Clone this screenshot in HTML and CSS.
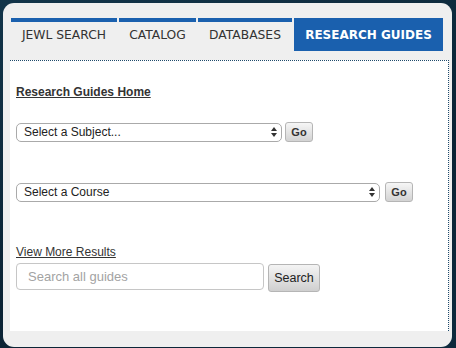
FILE: index.html
```html
<!DOCTYPE html>
<html lang="en">
<head>
    <meta charset="UTF-8">
    <title>Research Guides</title>
    <link rel="stylesheet" href="styles.css">
</head>
<body>
    <div class="panel">
        <ul class="tabs">
            <li class="tab jewl">JEWL SEARCH</li>
            <li class="tab catalog">CATALOG</li>
            <li class="tab databases">DATABASES</li>
            <li class="tab active">RESEARCH GUIDES</li>
        </ul>
        <div class="tab-box">
            <a href="#" class="home-link">Research Guides Home</a>
            <form class="pick-row subject-row" action="">
                <span class="select-wrap subject-select">
                    <select>
                        <option>Select a Subject...</option>
                    </select>
                    <svg class="arrows" width="6" height="10" viewBox="0 0 6 10"><path d="M3 0 L6 4 L0 4 Z M0 6 L6 6 L3 10 Z" fill="#333"/></svg>
                </span>
                <button class="go-button">Go</button>
            </form>
            <form class="pick-row course-row" action="">
                <span class="select-wrap course-select">
                    <select>
                        <option>Select a Course</option>
                    </select>
                    <svg class="arrows" width="6" height="10" viewBox="0 0 6 10"><path d="M3 0 L6 4 L0 4 Z M0 6 L6 6 L3 10 Z" fill="#333"/></svg>
                </span>
                <button class="go-button">Go</button>
            </form>
            <a href="#" class="more-link">View More Results</a>
            <form class="search-row" action="">
                <input type="text" placeholder="Search all guides">
                <button class="search-button">Search</button>
            </form>
        </div>
    </div>
</body>
</html>
```

FILE: styles.css
```css
*{
    margin:0;
    padding:0;
    box-sizing:border-box;
}
body{
    background:linear-gradient(160deg,#123449 0%,#0b2334 60%,#0e2a3d 100%);
    height:348px;
    overflow:hidden;
    padding:3px 0 0 3px;
}
.panel{
    width:449px;
    height:344px;
    background-color:#efefef;
    border-radius:11px;
    padding:15px 3px 0 7px;
}
.tabs{
    list-style:none;
    display:flex;
    gap:2px;
    margin-left:1px;
}
.tab{
    border-top:4px solid #1a60ae;
    height:33px;
    line-height:27px;
    text-align:center;
    font-family:"DejaVu Sans",Verdana,sans-serif;
    font-size:12.3px;
    color:#333;
}
.jewl{
    width:106px;
}
.catalog{
    width:77px;
}
.databases{
    width:94px;
}
.tab.active{
    width:149px;
    background-color:#1a60ae;
    color:#fff;
    font-weight:bold;
    font-size:12px;
}
.tab-box{
    margin-top:9px;
    height:271px;
    background-color:#fff;
    border-top:1px dotted #1f4a6b;
    border-right:1px dotted #1f4a6b;
    padding:0 0 0 6px;
    font-family:"Liberation Sans",Arial,sans-serif;
}
.home-link{
    display:block;
    margin-top:24px;
    line-height:15px;
    font-size:12px;
    font-weight:bold;
    color:#333;
}
.pick-row{
    display:flex;
    align-items:center;
}
.subject-row{
    margin-top:22px;
}
.course-row{
    margin-top:40px;
}
.select-wrap{
    position:relative;
    display:block;
}
.subject-select{
    width:266px;
}
.course-select{
    width:364px;
}
.select-wrap select{
    appearance:none;
    -webkit-appearance:none;
    width:100%;
    height:19px;
    border:1px solid #aaa;
    border-radius:5px;
    background-color:#fff;
    padding-left:7px;
    font-family:"Liberation Sans",Arial,sans-serif;
    font-size:12px;
    color:#222;
}
.arrows{
    position:absolute;
    right:5px;
    top:5px;
}
.go-button{
    margin-left:3px;
    width:28px;
    height:20px;
    border:1px solid #b5b5b5;
    border-radius:3px;
    background:linear-gradient(#f6f6f6,#d3d3d3);
    font-family:"Liberation Sans",Arial,sans-serif;
    font-size:11px;
    font-weight:bold;
    color:#333;
}
.course-row .go-button{
    margin-left:5px;
}
.more-link{
    display:block;
    margin-top:43px;
    line-height:15px;
    font-size:12px;
    color:#333;
}
.search-row{
    display:flex;
    align-items:flex-start;
    margin-top:3px;
}
.search-row input{
    width:248px;
    height:27px;
    border:1px solid #c6c6c6;
    border-radius:4px;
    padding-left:11px;
    font-family:"Liberation Sans",Arial,sans-serif;
    font-size:13px;
    color:#333;
}
.search-row input::placeholder{
    color:#a3a3a3;
}
.search-button{
    margin-left:4px;
    margin-top:1px;
    width:52px;
    height:28px;
    border:1px solid #b5b5b5;
    border-radius:3px;
    background:linear-gradient(#f4f4f4,#cfcfcf);
    font-family:"Liberation Sans",Arial,sans-serif;
    font-size:12.5px;
    color:#222;
}
```
